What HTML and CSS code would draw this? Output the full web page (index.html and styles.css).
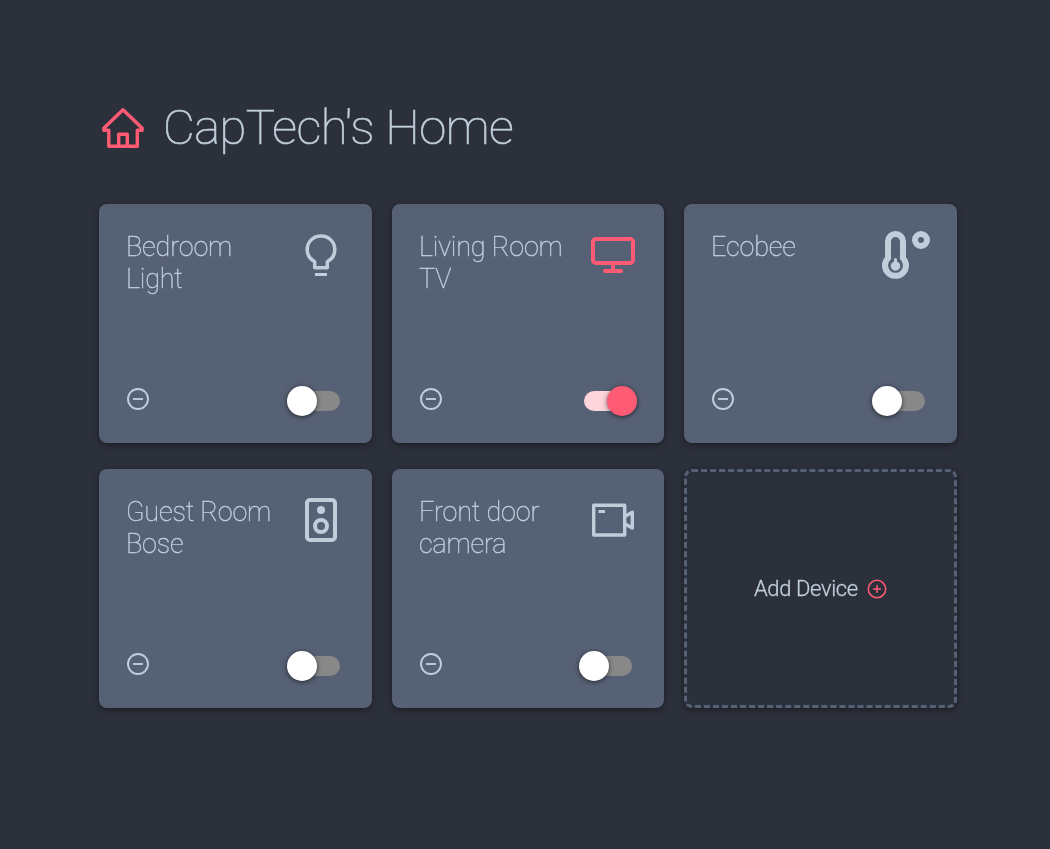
FILE: index.html
```html
<!DOCTYPE html>
<html lang="en">
<head>
<meta charset="utf-8">
<title>CapTech's Home</title>
<link rel="stylesheet" href="styles.css">
</head>
<body>
<main class="home">
  <header class="header">
    <svg class="house" viewBox="0 0 48 48" width="48" height="48"><path d="M24 5.700L4.800 24.300V26.200H9.800V42.300H38.300V26.200H43.200V24.300ZM19.700 42V30.300H28.300V42" fill="none" stroke="currentColor" stroke-width="3.400" stroke-linejoin="round"/></svg>
    <h1 class="title">CapTech's Home</h1>
  </header>
  <section class="grid">
    <article class="card">
      <div class="top"><h2 class="name">Bedroom Light</h2>
        <svg class="icon" viewBox="0 0 48 48"><path d="M17.700 36.700V30.700C13 28.200 10.200 24 10.200 18.700C10.200 10.900 16.200 4.900 24 4.900S37.800 10.900 37.800 18.700C37.800 24 35 28.200 30.300 30.700V36.700Z" fill="none" stroke="currentColor" stroke-width="3.500" stroke-linejoin="round"/><path d="M18 42H30V45H18Z" fill="currentColor"/></svg></div>
      <div class="bottom"><svg class="minus" viewBox="0 0 22 22"><circle cx="11" cy="11" r="10"/><path d="M6 11H16"/></svg><span class="switch"><span class="knob"></span></span></div>
    </article>
    <article class="card">
      <div class="top"><h2 class="name">Living Room TV</h2>
        <svg class="icon active" viewBox="0 0 48 48"><g fill="none" stroke="currentColor" stroke-width="4" stroke-linecap="round"><rect x="4" y="8" width="40" height="24" rx="3"/><path d="M26 32V40M18 40H34" transform="translate(-2 0)"/></g></svg></div>
      <div class="bottom"><svg class="minus" viewBox="0 0 22 22"><circle cx="11" cy="11" r="10"/><path d="M6 11H16"/></svg><span class="switch on"><span class="knob"></span></span></div>
    </article>
    <article class="card">
      <div class="top"><h2 class="name">Ecobee</h2>
        <svg class="icon" viewBox="0 0 48 48"><path d="M6 27V10.500A7.500 7.500 0 0 1 21 10.500V27A10.500 10.500 0 1 1 6 27Z" fill="none" stroke="currentColor" stroke-width="6"/><path d="M12 30.500V28.500A1.500 1.500 0 0 1 15 28.500V30.500A4.700 4.700 0 1 1 12 30.500Z" fill="currentColor"/><circle cx="39" cy="9" r="6" fill="none" stroke="currentColor" stroke-width="6"/></svg></div>
      <div class="bottom"><svg class="minus" viewBox="0 0 22 22"><circle cx="11" cy="11" r="10"/><path d="M6 11H16"/></svg><span class="switch"><span class="knob"></span></span></div>
    </article>
    <article class="card">
      <div class="top"><h2 class="name">Guest Room Bose</h2>
        <svg class="icon" viewBox="0 0 48 48"><g fill="none" stroke="currentColor" stroke-width="4"><rect x="10" y="4" width="28" height="40" rx="3"/><circle cx="24" cy="30" r="6"/></g><circle cx="24" cy="14" r="4" fill="currentColor"/></svg></div>
      <div class="bottom"><svg class="minus" viewBox="0 0 22 22"><circle cx="11" cy="11" r="10"/><path d="M6 11H16"/></svg><span class="switch"><span class="knob"></span></span></div>
    </article>
    <article class="card">
      <div class="top"><h2 class="name">Front door camera</h2>
        <svg class="icon" viewBox="0 0 48 48"><g fill="none" stroke="currentColor" stroke-width="3.400" stroke-linejoin="round"><rect x="4.700" y="9.200" width="31" height="29.800"/><path d="M35.700 20.500L43.300 16.300V32L35.700 27.800"/></g><path d="M9.500 14H16V17H9.500Z" fill="currentColor"/></svg></div>
      <div class="bottom"><svg class="minus" viewBox="0 0 22 22"><circle cx="11" cy="11" r="10"/><path d="M6 11H16"/></svg><span class="switch"><span class="knob"></span></span></div>
    </article>
    <article class="card add"><span class="label">Add Device</span><svg class="plus" viewBox="0 0 20 20"><circle cx="10" cy="10" r="8.700"/><path d="M6 10H14M10 6V14"/></svg></article>
  </section>
</main>
</body>
</html>
```
FILE: styles.css
```css
* { box-sizing: border-box; }
body {
  margin: 0;
  min-height: 849px;
  background: #2c303a;
  color: #c0cedb;
  font-family: Roboto, "Liberation Sans", sans-serif;
}
.home { width: 858px; margin-left: 99px; padding-top: 98px; }
.header { display: flex; align-items: center; gap: 16px; height: 60px; }
.house { color: #ff5b74; flex: none; }
.title, .name, .label { will-change: transform; }
.title {
  margin: 0;
  font-size: 49px;
  font-weight: 100;
  line-height: 60px;
  letter-spacing: -0.52px;
  white-space: nowrap;
  -webkit-text-stroke: 0.65px currentColor;
}
.grid {
  display: grid;
  grid-template-columns: repeat(3, 1fr);
  grid-auto-rows: 239px;
  gap: 26px 20px;
  margin-top: 46px;
}
.card {
  display: flex;
  flex-direction: column;
  justify-content: space-between;
  padding: 27px;
  border-radius: 8px;
  background: #576175;
  box-shadow: 0 2px 6px rgba(0, 0, 0, 0.4);
}
.top, .bottom { display: flex; justify-content: space-between; align-items: flex-start; }
.name {
  margin: 0;
  width: 155px;
  font-size: 27px;
  font-weight: 100;
  line-height: 32px;
  letter-spacing: -0.18px;
  -webkit-text-stroke: 0.4px currentColor;
}
.icon { width: 48px; height: 48px; flex: none; }
.active { color: #ff5b74; }
.minus { width: 22px; height: 22px; margin: 2px 0 0 1px; fill: none; stroke: currentColor; stroke-width: 1.900; }
.switch {
  display: flex;
  align-items: center;
  width: 58px;
  height: 30px;
  position: relative;
}
.switch::before {
  content: "";
  width: 48px;
  height: 20px;
  margin-left: 5px;
  border-radius: 10px;
  background: #888;
}
.knob {
  position: absolute;
  left: 0;
  top: 0;
  width: 30px;
  height: 30px;
  border-radius: 50%;
  background: #fff;
  box-shadow: 0 1px 5px rgba(0, 0, 0, 0.6);
}
.on::before { background: #ffd5dc; }
.on .knob { left: 28px; background: #ff5b74; }
.add {
  flex-direction: row;
  justify-content: center;
  align-items: center;
  gap: 9px;
  padding: 0;
  border: 3px dashed #576175;
  background: #2c303a;
  font-size: 22px;
  font-weight: 300;
}
.label { letter-spacing: -0.38px; -webkit-text-stroke: 0.3px currentColor; }
.plus { width: 20px; height: 20px; fill: none; stroke: #ff5b74; stroke-width: 1.500; }
```
